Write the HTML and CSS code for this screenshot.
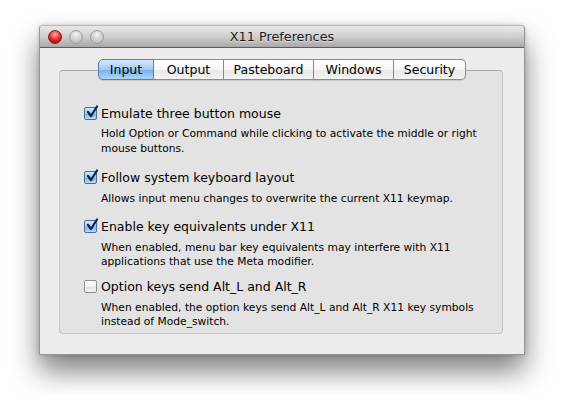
FILE: index.html
```html
<!DOCTYPE html>
<html>
<head>
<meta charset="utf-8">
<link rel="stylesheet" href="styles.css">
</head>
<body>
<div class="window">
  <div class="titlebar">
    <div class="lights">
      <span class="light red"></span>
      <span class="light gray"></span>
      <span class="light gray"></span>
    </div>
    <div class="title">X11 Preferences</div>
  </div>
  <div class="content">
    <div class="tabs">
      <span class="tab sel">Input</span>
      <span class="tab">Output</span>
      <span class="tab">Pasteboard</span>
      <span class="tab">Windows</span>
      <span class="tab last">Security</span>
    </div>
    <div class="group">
      <div class="item">
        <div class="opt"><span class="cb on"><svg viewBox="0 0 14 14" width="14" height="14"><path d="M3 7 L6 11 L12 1.5" fill="none" stroke="#0e2440" stroke-width="2.2" stroke-linecap="round" stroke-linejoin="round"/></svg></span>Emulate three button mouse</div>
        <div class="desc">Hold Option or Command while clicking to activate the middle or right<br>mouse buttons.</div>
      </div>
      <div class="item">
        <div class="opt"><span class="cb on"><svg viewBox="0 0 14 14" width="14" height="14"><path d="M3 7 L6 11 L12 1.5" fill="none" stroke="#0e2440" stroke-width="2.2" stroke-linecap="round" stroke-linejoin="round"/></svg></span>Follow system keyboard layout</div>
        <div class="desc">Allows input menu changes to overwrite the current X11 keymap.</div>
      </div>
      <div class="item">
        <div class="opt"><span class="cb on"><svg viewBox="0 0 14 14" width="14" height="14"><path d="M3 7 L6 11 L12 1.5" fill="none" stroke="#0e2440" stroke-width="2.2" stroke-linecap="round" stroke-linejoin="round"/></svg></span>Enable key equivalents under X11</div>
        <div class="desc">When enabled, menu bar key equivalents may interfere with X11<br>applications that use the Meta modifier.</div>
      </div>
      <div class="item">
        <div class="opt"><span class="cb"></span>Option keys send Alt_L and Alt_R</div>
        <div class="desc">When enabled, the option keys send Alt_L and Alt_R X11 key symbols<br>instead of Mode_switch.</div>
      </div>
    </div>
  </div>
</div>
</body>
</html>
```
FILE: styles.css
```css
html, body { margin: 0; padding: 0; background: #ffffff; }
body { font-family: "DejaVu Sans", "Liberation Sans", sans-serif; color: #000; padding: 25px 0 40px 39px; }

.window {
  width: 486px;
  height: 330px;
  box-sizing: border-box;
  border: 1px solid #969696;
  border-top-color: #b8b8b8;
  border-radius: 4px 4px 0 0;
  background: #ececec;
  box-shadow: 0 16px 28px rgba(0,0,0,0.5), 0 0 4px rgba(0,0,0,0.2);
}

.titlebar {
  height: 21px;
  border-bottom: 1px solid #5c5c5c;
  border-radius: 3px 3px 0 0;
  background: linear-gradient(#e9e9e9, #cfcfcf 50%, #a9a9a9);
  display: flex;
  align-items: center;
  position: relative;
}
.lights { display: flex; gap: 7px; padding-left: 8px; width: 64px; box-sizing: border-box; }
.light { width: 14px; height: 14px; border-radius: 50%; box-sizing: border-box; flex: none; }
.light.red {
  background: radial-gradient(circle at 50% 30%, #ffb6b6 0, #f05050 35%, #c80f0f 70%, #a00000 100%);
  border: 1px solid #8a2020;
}
.light.gray {
  background: radial-gradient(circle at 50% 30%, #f4f4f4 0, #d6d6d6 40%, #b4b4b4 100%);
  border: 1px solid #9c9c9c;
}
.title {
  flex: 1;
  text-align: center;
  font-size: 12.8px;
  color: #1a1a1a;
  margin-right: 64px;
  text-shadow: 0 1px 0 rgba(255,255,255,0.5);
}

.content { padding-top: 11px; }

.tabs {
  display: flex;
  justify-content: center;
  position: relative;
  z-index: 1;
  height: 21px;
}
.tab {
  box-sizing: border-box;
  height: 21px;
  line-height: 19px;
  font-size: 12.5px;
  text-align: center;
  border: 1px solid #8c8c8c;
  border-left: none;
  background: linear-gradient(#ffffff, #f6f6f6 50%, #e8e8e8 51%, #f4f4f4);
  box-shadow: 0 1px 1px rgba(0,0,0,0.12);
}
.tab.sel {
  border: 1px solid #5b7db0;
  border-radius: 5px 0 0 5px;
  background: linear-gradient(#d6e8fb, #a2cbf4 50%, #76b0ec 51%, #aed6f9);
  width: 56px;
}
.tab.last { border-radius: 0 5px 5px 0; }
.tab:nth-child(2) { width: 70px; }
.tab:nth-child(3) { width: 90px; }
.tab:nth-child(4) { width: 80px; }
.tab:nth-child(5) { width: 72px; }

.group {
  margin: -10px 0 0 19px;
  width: 444px;
  height: 264px;
  box-sizing: border-box;
  border: 1px solid #c6c6c6;
  border-top-color: #a8a8a8;
  border-radius: 4px;
  background: #e3e3e3;
  padding: 33px 0 0 24px;
}

.item { margin-bottom: 11px; }
.item:nth-child(1) { margin-bottom: 12px; }
.item:nth-child(3) { margin-bottom: 8px; }
.opt {
  display: flex;
  align-items: center;
  height: 18px;
  font-size: 12.5px;
}
.cb {
  width: 13px;
  height: 13px;
  box-sizing: border-box;
  border: 1px solid #8e8e8e;
  border-radius: 2px;
  background: linear-gradient(#ffffff, #f0f0f0 50%, #dedede 51%, #f4f4f4);
  margin-right: 4px;
  flex: none;
  position: relative;
}
.cb.on {
  border-color: #4b6d9e;
  background: linear-gradient(#d4e6fa, #9fc8f2 50%, #78b0ea 51%, #b8dcfb);
}
.cb svg { position: absolute; left: 0; top: -3px; }
.desc {
  margin-top: 6px;
  padding-left: 17px;
  font-size: 10.7px;
  line-height: 14px;
}
.item:nth-child(1) .desc { margin-top: 5px; line-height: 14.5px; }
```
